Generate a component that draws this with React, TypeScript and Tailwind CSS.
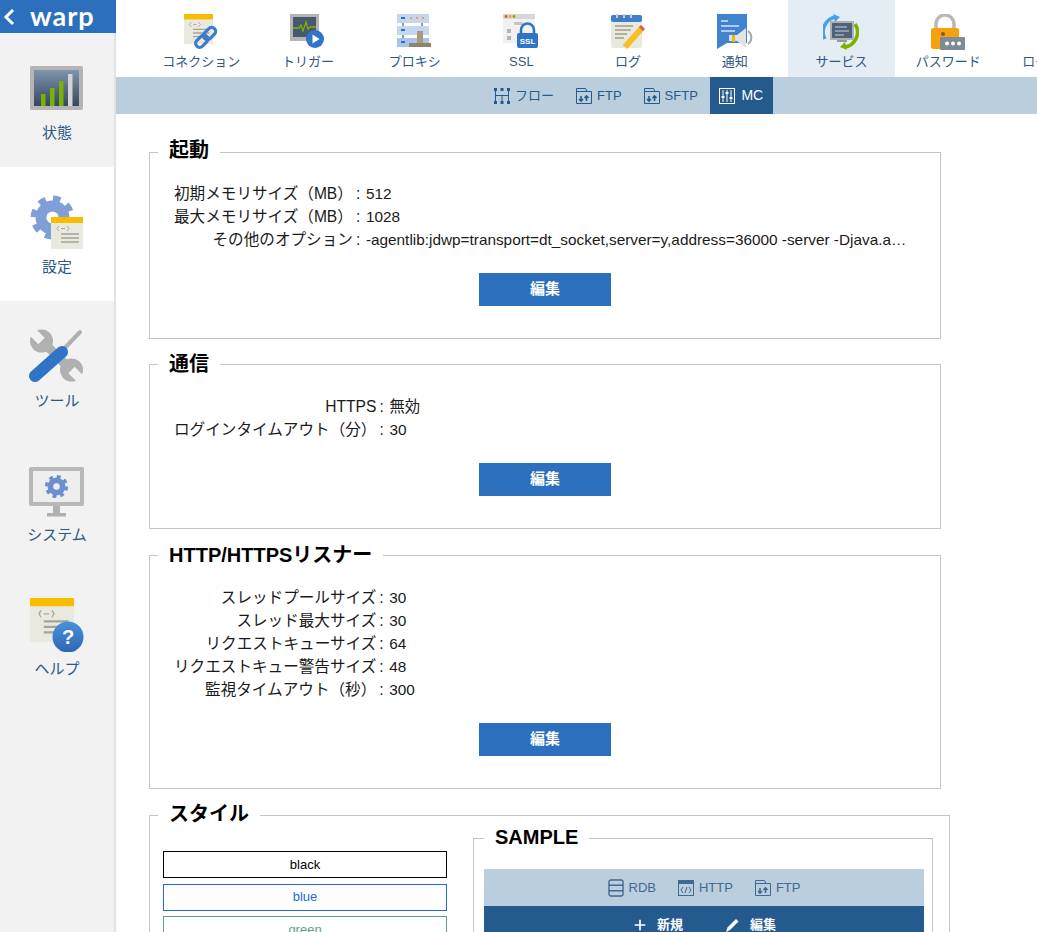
import type { ReactNode } from "react";
import { Plus } from "lucide-react";

const FONT = "font-['Liberation_Sans','Noto_Sans_CJK_JP',sans-serif]";

function Gear({ cx, cy, r, color, hole }: { cx: number; cy: number; r: number; color: string; hole?: string }) {
  const teeth = 2 * Math.PI * (r * 1.08);
  return (
    <g>
      <circle cx={cx} cy={cy} r={r * 1.08} fill="none" stroke={color} strokeWidth={r * 0.42} strokeDasharray={`${teeth / 16} ${teeth / 16}`} />
      <circle cx={cx} cy={cy} r={r} fill={color} />
      {hole ? <circle cx={cx} cy={cy} r={r * 0.36} fill={hole} /> : null}
    </g>
  );
}

function Doc({ x, y, w, h }: { x: number; y: number; w: number; h: number }) {
  const u = w / 32;
  return (
    <g>
      <rect x={x} y={y} width={w} height={h} fill="#e9e9df" />
      <rect x={x} y={y} width={w} height={6 * u} fill="#f9bd00" />
      <path d={`M${x + 8 * u} ${y + 9 * u}l-2 ${2.5 * u}l2 ${2.5 * u}M${x + 16 * u} ${y + 9 * u}l2 ${2.5 * u}l-2 ${2.5 * u}M${x + 10 * u} ${y + 11.5 * u}h${4 * u}`} stroke="#a8a89c" strokeWidth={u} fill="none" />
      <path d={`M${x + 10 * u} ${y + 17 * u}h${18 * u}M${x + 10 * u} ${y + 21 * u}h${18 * u}M${x + 10 * u} ${y + 25 * u}h${18 * u}`} stroke="#a4a498" strokeWidth={1.5 * u} />
    </g>
  );
}

function StatusIcon() {
  return (
    <svg width="56" height="56" viewBox="0 -5 56 56">
      <defs>
        <linearGradient id="stScreen" x1="0" y1="0" x2="0" y2="1">
          <stop offset="0" stopColor="#7f94ad" />
          <stop offset="1" stopColor="#33475f" />
        </linearGradient>
      </defs>
      <rect x="1" y="1" width="53" height="44" rx="2" fill="#b4b4b4" />
      <rect x="5" y="5" width="45" height="36" fill="url(#stScreen)" />
      <rect x="12" y="29" width="4.5" height="12" fill="#7db100" />
      <rect x="21" y="23" width="4.5" height="18" fill="#7db100" />
      <rect x="30" y="16" width="4.5" height="25" fill="#7db100" />
      <rect x="39" y="9" width="4.5" height="32" fill="#d4d4d4" />
    </svg>
  );
}

function SettingsIcon() {
  return (
    <svg width="56" height="56" viewBox="0 0 56 56">
      <Gear cx={23.5} cy={23.5} r={17} color="#7f9fd6" hole="#ffffff" />
      <g transform="translate(22 23)">
        <Doc x={0} y={0} w={32} h={32} />
      </g>
    </svg>
  );
}

function ToolsIcon() {
  return (
    <svg width="56" height="56" viewBox="0 0 56 56">
      <path d="M13 13L42 42" stroke="#b0b0b0" strokeWidth="9" />
      <circle cx="12.5" cy="13" r="11.5" fill="#b0b0b0" />
      <path d="M12.5 13L1 1.5" stroke="#f2f2f2" strokeWidth="9" />
      <circle cx="42.5" cy="42" r="11.5" fill="#b0b0b0" />
      <path d="M42.5 42L55 54.5" stroke="#f2f2f2" strokeWidth="9" />
      <path d="M51 4L31 25" stroke="#b0b0b0" strokeWidth="4" strokeLinecap="round" />
      <path d="M33 24L6 48" stroke="#2f74c6" strokeWidth="12" strokeLinecap="round" />
    </svg>
  );
}

function SystemIcon() {
  return (
    <svg width="58" height="56" viewBox="0 -4 58 56">
      <rect x="1" y="1" width="55" height="39" rx="2" fill="#b8b8b8" />
      <rect x="5" y="5" width="47" height="31" fill="#eeeeee" />
      <path d="M25 40h7v7h-7z" fill="#b0b0b0" />
      <rect x="19" y="47" width="19" height="3.5" fill="#b0b0b0" />
      <Gear cx={28.5} cy={20.5} r={9} color="#6c90cf" hole="#eeeeee" />
    </svg>
  );
}

function HelpIcon() {
  return (
    <svg width="56" height="56" viewBox="0 0 56 56">
      <defs>
        <linearGradient id="hpBall" x1="0" y1="0" x2="0" y2="1">
          <stop offset="0" stopColor="#4a90db" />
          <stop offset="1" stopColor="#2f66b0" />
        </linearGradient>
      </defs>
      <Doc x={1} y={2} w={44} h={44} />
      <circle cx="39" cy="41" r="15.5" fill="url(#hpBall)" />
      <text x="39" y="48" textAnchor="middle" fontSize="20" fontWeight="700" fill="#fff" fontFamily="Liberation Sans">?</text>
    </svg>
  );
}

function ConnectionIcon() {
  return (
    <svg width="36" height="36" viewBox="0 0 36 36">
      <Doc x={1} y={0} w={29} h={30} />
      <g transform="rotate(-45 23 23)" fill="none" stroke="#3c7cc9" strokeWidth="3.2">
        <rect x="10" y="19" width="14" height="8" rx="4" />
        <rect x="21" y="19" width="14" height="8" rx="4" />
      </g>
    </svg>
  );
}

function TriggerIcon() {
  return (
    <svg width="36" height="36" viewBox="0 0 36 36">
      <rect x="0" y="0" width="29" height="27" fill="#b4b4b4" />
      <rect x="3" y="3" width="23" height="20" fill="#47586f" />
      <path d="M3 14h6l2-3 2 6 3-9 2 7 2-2h6" stroke="#7db100" strokeWidth="1.3" fill="none" />
      <circle cx="25" cy="25" r="9" fill="#2f74c6" />
      <path d="M22.5 20.5l7 4.5-7 4.5z" fill="#fff" />
    </svg>
  );
}

function ProxyIcon() {
  return (
    <svg width="36" height="36" viewBox="0 0 36 36">
      <rect x="0" y="0" width="32" height="9" fill="#c4d6f0" />
      <rect x="0" y="12" width="32" height="9" fill="#c4d6f0" />
      <rect x="0" y="24" width="32" height="9" fill="#a9c4ea" />
      <path d="M4 4h4M4 16h4M4 28h4" stroke="#2f6ebb" strokeWidth="2" />
      <path d="M13 4h2M19 4h2M25 4h2" stroke="#eea53a" strokeWidth="2" />
      <path d="M6 9v3M6 21v3M25 9v3" stroke="#777" strokeWidth="1.5" />
      <path d="M20 17h6v13h-6z" fill="#a69a78" />
      <path d="M12 29h22v4H12z" fill="#8f8566" />
    </svg>
  );
}

function SslIcon() {
  return (
    <svg width="36" height="36" viewBox="0 0 36 36">
      <rect x="0" y="0" width="32" height="29" fill="#f1f1f1" />
      <rect x="0" y="0" width="32" height="5" fill="#d6d6d6" />
      <circle cx="3" cy="2.5" r="1.4" fill="#dd5555" />
      <circle cx="7" cy="2.5" r="1.4" fill="#eda63a" />
      <circle cx="11" cy="2.5" r="1.4" fill="#7db100" />
      <path d="M4 15h4v4H4zM4 22h4v4H4z" fill="#b5b5b5" />
      <path d="M11 8h9v3h-9z" fill="#c4c4c4" />
      <path d="M18 20v-4a6.5 6.5 0 0 1 13 0v4" stroke="#2f74c6" strokeWidth="2.6" fill="none" />
      <rect x="14" y="19" width="21" height="15" rx="2" fill="#2f74c6" />
      <text x="24.5" y="30" textAnchor="middle" fontSize="8" fontWeight="700" fill="#fff" fontFamily="Liberation Sans">SSL</text>
    </svg>
  );
}

function LogIcon() {
  return (
    <svg width="36" height="36" viewBox="0 0 36 36">
      <rect x="1" y="1" width="31" height="33" rx="2" fill="#e9e9df" />
      <rect x="1" y="1" width="31" height="7" rx="2" fill="#3e7fcb" />
      <path d="M7 0v4M14 0v4M21 0v4" stroke="#cfcfc0" strokeWidth="2" />
      <path d="M5 12h18M5 16h16M5 20h12M5 24h9" stroke="#9c9c90" strokeWidth="1.4" />
      <path d="M32 14L15 33" stroke="#f6bf26" strokeWidth="6" />
      <path d="M30 12l4 4" stroke="#dd5555" strokeWidth="3" />
    </svg>
  );
}

function NotifyIcon() {
  return (
    <svg width="36" height="36" viewBox="0 0 36 36">
      <path d="M0 0h30v29H10L0 35z" fill="#4183cf" />
      <path d="M4 7h7M4 12h18M4 17h14" stroke="#d5e4f6" strokeWidth="1.6" />
      <path d="M12 21h8l9-7v20l-9-7h-8z" fill="#e2e2e2" />
      <rect x="15" y="21" width="3" height="7" fill="#f3b40b" />
      <path d="M31 17a8 8 0 0 1 0 13" stroke="#a8a8a8" strokeWidth="2" fill="none" />
    </svg>
  );
}

function ServiceIcon() {
  return (
    <svg width="36" height="36" viewBox="0 0 36 36">
      <path d="M2 25A15 15 0 0 1 13 3" stroke="#49a0ea" strokeWidth="3.5" fill="none" />
      <path d="M10 0l7 3-5 5z" fill="#49a0ea" />
      <path d="M32 10A15 15 0 0 1 22 33" stroke="#7db100" strokeWidth="3.5" fill="none" />
      <path d="M24 36l-7-3 5-5z" fill="#7db100" />
      <rect x="7" y="7" width="24" height="19" fill="#b0b0b0" />
      <rect x="9" y="9" width="20" height="15" fill="#4f627c" />
      <path d="M12 13h12M12 17h14M12 21h9" stroke="#c8d4e2" strokeWidth="1.2" />
      <path d="M14 26h10v2H14z" fill="#999" />
    </svg>
  );
}

function PasswordIcon() {
  return (
    <svg width="36" height="36" viewBox="0 0 36 36">
      <path d="M6 15V10a9 9 0 0 1 18 0v5" stroke="#b8b8b8" strokeWidth="3.5" fill="none" />
      <rect x="1" y="14" width="28" height="21" rx="2" fill="#f5a20e" />
      <circle cx="13" cy="20" r="2" fill="#8a5c06" />
      <rect x="10" y="23" width="25" height="13" rx="1" fill="#7f8a97" />
      <circle cx="17" cy="29.5" r="2" fill="#fff" />
      <circle cx="23" cy="29.5" r="2" fill="#fff" />
      <circle cx="29" cy="29.5" r="2" fill="#fff" />
    </svg>
  );
}

function FlowIcon({ color = "#255a8e" }: { color?: string }) {
  return (
    <svg width="16" height="16" viewBox="0 0 16 16" fill={color}>
      <path d="M0 0h3v3H0zM6.5 0h3v3h-3zM13 0h3v3h-3zM0 13h3v3H0zM6.5 13h3v3h-3zM13 13h3v3h-3zM1 3h1v4h12V3h1v5H8.5v5h-1V8H1z" />
      <path d="M1 8h1v5H1zM14 8h1v5h-1z" />
    </svg>
  );
}

function FtpIcon({ color = "#255a8e" }: { color?: string }) {
  return (
    <svg width="16" height="16" viewBox="0 0 16 16" fill="none" stroke={color}>
      <path d="M.5 15.5V.5h9l1.5 3h4.5v12zM.5 3.5H11" />
      <path d="M5 8v5M3 11l2 2 2-2M10.5 13V8M8.5 10l2-2 2 2" strokeWidth="1.6" />
    </svg>
  );
}

function McIcon() {
  return (
    <svg width="16" height="16" viewBox="0 0 16 16" fill="none" stroke="#fff">
      <rect x=".5" y=".5" width="15" height="15" />
      <path d="M4 2v12M8 2v12M12 2v12" />
      <path d="M2.5 9h3M6.5 5h3M10.5 10h3" strokeWidth="2" />
    </svg>
  );
}

function RdbIcon() {
  return (
    <svg width="16" height="18" viewBox="0 0 16 18" fill="none" stroke="#41688f" strokeWidth="1.4">
      <rect x="1" y="1" width="14" height="16" rx="2" />
      <path d="M1 6.3h14M1 11.7h14" />
    </svg>
  );
}

function HttpIcon() {
  return (
    <svg width="16" height="16" viewBox="0 0 16 16">
      <rect x=".5" y=".5" width="15" height="15" fill="none" stroke="#41688f" />
      <rect x="0" y="0" width="16" height="4" fill="#41688f" />
      <path d="M5 7L3 10l2 3M11 7l2 3-2 3M9 7l-2 6" stroke="#41688f" fill="none" />
    </svg>
  );
}

const topNav: { label: string; icon: ReactNode; active?: boolean }[] = [
  { label: "コネクション", icon: <ConnectionIcon /> },
  { label: "トリガー", icon: <TriggerIcon /> },
  { label: "プロキシ", icon: <ProxyIcon /> },
  { label: "SSL", icon: <SslIcon /> },
  { label: "ログ", icon: <LogIcon /> },
  { label: "通知", icon: <NotifyIcon /> },
  { label: "サービス", icon: <ServiceIcon />, active: true },
  { label: "パスワード", icon: <PasswordIcon /> },
  { label: "ログアウト", icon: null },
];

const sideNav: { label: string; icon: ReactNode; active?: boolean }[] = [
  { label: "状態", icon: <StatusIcon /> },
  { label: "設定", icon: <SettingsIcon />, active: true },
  { label: "ツール", icon: <ToolsIcon /> },
  { label: "システム", icon: <SystemIcon /> },
  { label: "ヘルプ", icon: <HelpIcon /> },
];

function Sidebar() {
  return (
    <aside className="flex h-full w-[116px] shrink-0 flex-col bg-[#f2f2f2]">
      <div className="flex h-[33px] items-center gap-[15px] bg-[#2c6fbc] pl-[3px] text-white">
        <svg width="12" height="18" viewBox="0 0 12 18" fill="none" stroke="#fff" strokeWidth="3">
          <path d="M10 2L3 9l7 7" />
        </svg>
        <span className="pb-[3px] font-['Lato',sans-serif] text-[27px] font-bold leading-none tracking-[1px]">warp</span>
      </div>
      <div className="flex flex-1 flex-col border-r-2 border-[#e2e2e2]">
        {sideNav.map((item) => (
          <a
            key={item.label}
            className={`flex h-[134px] flex-col items-center pt-[27px] ${item.active ? "bg-white" : ""}`}
          >
            <span className="flex h-[56px] items-start justify-center">{item.icon}</span>
            <span className="mt-[7px] text-[15px] leading-[20px] text-[#2d5883]">{item.label}</span>
          </a>
        ))}
      </div>
    </aside>
  );
}

function TopNav() {
  return (
    <nav className="flex h-[77px] overflow-hidden bg-white pl-[32px]">
      {topNav.map((item) => (
        <a
          key={item.label}
          className={`flex w-[106.7px] shrink-0 flex-col items-center pt-[14px] ${item.active ? "bg-[#e4ecf4]" : ""}`}
        >
          <span className="flex h-[36px] items-center justify-center">{item.icon}</span>
          <span className="mt-[3px] whitespace-nowrap text-[13px] leading-[18px] text-[#2d5883]">{item.label}</span>
        </a>
      ))}
    </nav>
  );
}

function SubNav() {
  return (
    <div className="flex h-[37px] items-stretch bg-[#bbcedd] pl-[368px] text-[13px] text-[#255a8e]">
      <a className="flex items-center gap-[5px] px-[10px]">
        <FlowIcon />
        フロー
      </a>
      <a className="ml-[2px] flex items-center gap-[5px] px-[10px]">
        <FtpIcon />
        FTP
      </a>
      <a className="ml-[2px] flex items-center gap-[5px] px-[10px]">
        <FtpIcon />
        SFTP
      </a>
      <a className="ml-[2px] flex w-[63px] items-center justify-center gap-[6px] bg-[#255a8e] text-[14px] text-white">
        <McIcon />
        MC
      </a>
    </div>
  );
}

function Section({
  title,
  className,
  legendClass = "leading-[26px]",
  children,
}: {
  title: string;
  className: string;
  legendClass?: string;
  children: ReactNode;
}) {
  return (
    <fieldset className={`border border-[#c4c4c4] ${className}`}>
      <legend className={`ml-[8px] px-[11px] text-[20px] font-bold text-black ${legendClass}`}>{title}</legend>
      {children}
    </fieldset>
  );
}

function Rows({ rows, className }: { rows: [string, string][]; className: string }) {
  return (
    <div className={`ml-[24px] grid w-fit grid-cols-[auto_13px_auto] text-[15.6px] leading-[23px] text-[#1a1a1a] ${className}`}>
      {rows.map(([label, value]) => (
        <div key={label} className="contents">
          <span className="whitespace-nowrap text-right">{label}</span>
          <span className="pl-[3px]">:</span>
          <span className="whitespace-nowrap text-[15.35px]">{value}</span>
        </div>
      ))}
    </div>
  );
}

function EditButton() {
  return (
    <div className="mt-[22px] flex justify-center">
      <button type="button" className="h-[33px] w-[132px] bg-[#2c6fbc] text-[15px] font-bold text-white">
        編集
      </button>
    </div>
  );
}

function StyleSwatch({ label, border, text }: { label: string; border: string; text: string }) {
  return (
    <div className={`flex h-[27px] items-center justify-center border text-[13px] ${border} ${text}`}>{label}</div>
  );
}

export default function App() {
  return (
    <div className={`flex h-screen overflow-hidden bg-white ${FONT}`}>
      <Sidebar />
      <div className="min-w-0 flex-1">
        <TopNav />
        <SubNav />
        <main className="flex flex-col pl-[33px] pt-[25px]">
          <Section title="起動" className="h-[200px] w-[792px]" legendClass="pb-[4px] leading-[22px]">
            <Rows
              className="mt-[17px]"
              rows={[
                ["初期メモリサイズ（MB）", "512"],
                ["最大メモリサイズ（MB）", "1028"],
                ["その他のオプション", "-agentlib:jdwp=transport=dt_socket,server=y,address=36000 -server -Djava.a…"],
              ]}
            />
            <EditButton />
          </Section>
          <Section title="通信" className="mt-[12px] h-[178px] w-[792px]">
            <Rows
              className="mt-[18px]"
              rows={[
                ["HTTPS", "無効"],
                ["ログインタイムアウト（分）", "30"],
              ]}
            />
            <EditButton />
          </Section>
          <Section title="HTTP/HTTPSリスナー" className="mt-[13px] h-[247px] w-[792px]">
            <Rows
              className="mt-[18px]"
              rows={[
                ["スレッドプールサイズ", "30"],
                ["スレッド最大サイズ", "30"],
                ["リクエストキューサイズ", "64"],
                ["リクエストキュー警告サイズ", "48"],
                ["監視タイムアウト（秒）", "300"],
              ]}
            />
            <EditButton />
          </Section>
          <Section title="スタイル" className="mt-[13px] w-[801px]" legendClass="pb-[2px] leading-[24px]">
            <div className="flex gap-[26px] px-[13px] pt-[10px]">
              <div className="mt-[13px] flex w-[284px] flex-col gap-[5.5px]">
                <StyleSwatch label="black" border="border-black" text="text-black" />
                <StyleSwatch label="blue" border="border-[#2468e0]" text="text-[#2468e0]" />
                <StyleSwatch label="green" border="border-[#5fa382]" text="text-[#5fa382]" />
              </div>
              <fieldset className="-mt-[13px] w-[460px] border border-[#c4c4c4] pb-[20px] pl-[10px] pr-[8px]">
                <legend className="px-[11px] pb-[2px] text-[20px] font-bold leading-[24px] text-black">SAMPLE</legend>
                <div className="mt-[18px] flex h-[37px] items-center justify-center gap-[22px] bg-[#bbcedd] text-[13px] text-[#41688f]">
                  <span className="flex items-center gap-[5px]">
                    <RdbIcon />
                    RDB
                  </span>
                  <span className="flex items-center gap-[5px]">
                    <HttpIcon />
                    HTTP
                  </span>
                  <span className="flex items-center gap-[5px]">
                    <FtpIcon color="#41688f" />
                    FTP
                  </span>
                </div>
                <div className="flex h-[37px] items-center justify-center gap-[42px] bg-[#255a8e] text-[13px] font-bold text-white">
                  <span className="flex items-center gap-[9px]">
                    <Plus size={16} strokeWidth={2.5} />
                    新規
                  </span>
                  <span className="flex items-center gap-[11px]">
                    <svg width="14" height="16" viewBox="0 0 14 16" fill="#fff">
                      <path d="M1 15L2.5 10.5L11 2l2.5 2.5L5 13z" />
                    </svg>
                    編集
                  </span>
                </div>
              </fieldset>
            </div>
          </Section>
        </main>
      </div>
    </div>
  );
}
